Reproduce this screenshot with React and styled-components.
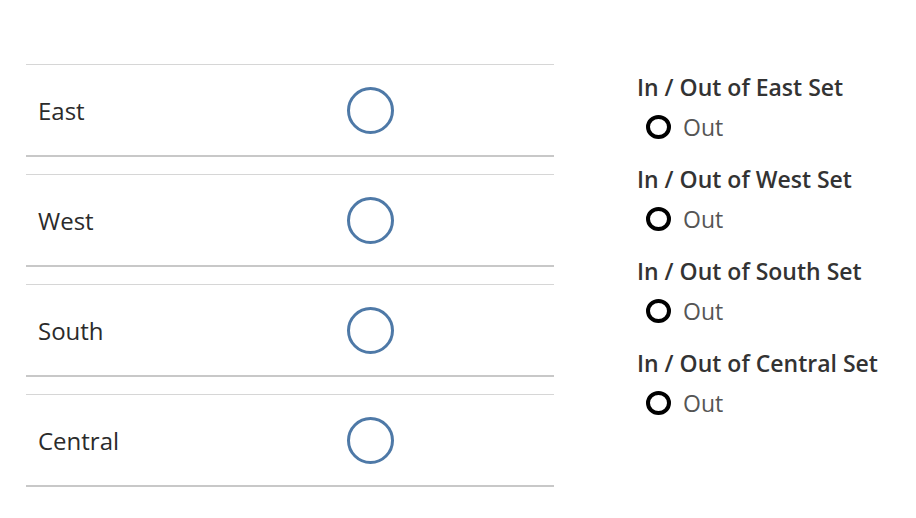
import React from "react";
import styled, { createGlobalStyle } from "styled-components";

const regions = ["East", "West", "South", "Central"];

const Global = createGlobalStyle`
  body {
    margin: 0;
    background: #ffffff;
    font-family: "Open Sans", "Noto Sans", sans-serif;
  }
`;

const App = () => {
  return (
    <>
      <Global />
      <Page>
        <Table>
          {regions.map((r) => (
            <Row key={r}>
              <Label>{r}</Label>
              <Ring />
            </Row>
          ))}
        </Table>
        <Side>
          {regions.map((r) => (
            <Filter key={r}>
              <Title>In / Out of {r} Set</Title>
              <Option>
                <Dot />
                <OptText>Out</OptText>
              </Option>
            </Filter>
          ))}
        </Side>
      </Page>
    </>
  );
};

export default App;

const Page = styled.div`
  width: 916px;
  height: 518px;
  display: flex;
  align-items: flex-start;
  padding: 64px 0 0 26px;
  box-sizing: border-box;
`;

const Table = styled.div`
  width: 528px;
  display: flex;
  flex-direction: column;
  gap: 17px;
`;

const Row = styled.div`
  height: 90px;
  display: flex;
  align-items: center;
  padding-left: 12px;
  border-top: 1px solid #d6d6d6;
  border-bottom: 2px solid #c8c8c8;
`;

const Label = styled.div`
  width: 309px;
  font-size: 24px;
  font-weight: 500;
  color: #2b2b2b;
`;

const Ring = styled.div`
  width: 41px;
  height: 41px;
  border: 3px solid #4e79a7;
  border-radius: 50%;
`;

const Side = styled.div`
  margin-left: 83px;
  padding-top: 8px;
  display: flex;
  flex-direction: column;
  gap: 20px;
`;

const Filter = styled.div`
  display: flex;
  flex-direction: column;
  gap: 8px;
`;

const Title = styled.div`
  font-size: 23px;
  line-height: 30px;
  font-weight: 600;
  color: #333333;
`;

const Option = styled.div`
  height: 34px;
  display: flex;
  align-items: center;
  padding-left: 9px;
`;

const Dot = styled.div`
  width: 17px;
  height: 16px;
  border: 4px solid #000000;
  border-radius: 50%;
  margin-right: 12px;
`;

const OptText = styled.div`
  font-size: 23px;
  color: #555555;
`;
